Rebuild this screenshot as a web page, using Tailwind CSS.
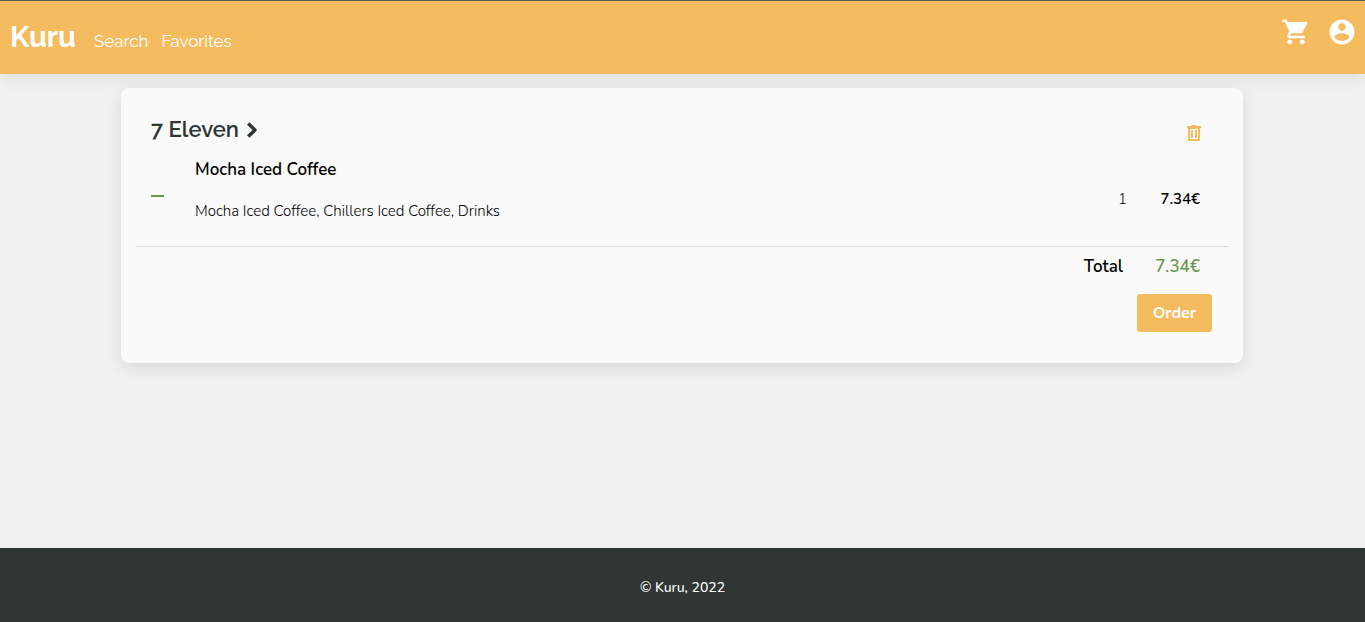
<!DOCTYPE html>
<html lang="en">
<head>
<meta charset="utf-8">
<meta name="viewport" content="width=device-width, initial-scale=1">
<title>Kuru</title>
<script src="https://cdn.jsdelivr.net/npm/@tailwindcss/browser@4"></script>
</head>
<body class="flex min-h-screen flex-col bg-[#f1f1f1] font-['Nunito','Noto_Sans',sans-serif] text-black">
<header class="flex items-start justify-between border-t border-[#5a5a5a] bg-[#f4bb5f] pt-4 pr-2 pb-[17px] pl-[10px] font-['Raleway','Lato',sans-serif] text-white shadow-[0_5px_15px_rgba(0,0,0,0.08)]">
  <nav class="flex h-10 items-baseline">
    <a href="#" class="mr-[18px] text-[29px] leading-10 font-bold">Kuru</a>
    <a href="#" class="mr-[13px] text-[17px]">Search</a>
    <a href="#" class="text-[17px]">Favorites</a>
  </nav>
  <div class="flex gap-4">
    <a href="#" aria-label="Cart"><svg class="size-[30px]" viewBox="0 0 24 24" fill="currentColor"><path d="M7 18c-1.100 0-1.990.9-1.990 2S5.900 22 7 22s2-.9 2-2-.9-2-2-2zM1 2v2h2l3.600 7.590-1.350 2.450c-.16.280-.25.610-.25.960 0 1.100.9 2 2 2h12v-2H7.420c-.14 0-.25-.11-.25-.25l.03-.12.900-1.630h7.450c.75 0 1.410-.41 1.750-1.030l3.580-6.490A1 1 0 0 0 20 4H5.210l-.94-2H1zm16 16c-1.100 0-1.990.9-1.990 2s.89 2 1.990 2 2-.9 2-2-.9-2-2-2z"/></svg></a>
    <a href="#" aria-label="Account"><svg class="size-[30px]" viewBox="0 0 24 24" fill="currentColor"><path d="M12 2C6.480 2 2 6.480 2 12s4.480 10 10 10 10-4.480 10-10S17.520 2 12 2zm0 3c1.660 0 3 1.340 3 3s-1.340 3-3 3-3-1.340-3-3 1.340-3 3-3zm0 14.200c-2.500 0-4.710-1.280-6-3.220.03-1.990 4-3.080 6-3.080 1.990 0 5.970 1.090 6 3.080-1.290 1.940-3.500 3.220-6 3.220z"/></svg></a>
  </div>
</header>
<main class="flex-1 py-[14px] pr-[17px] pl-4">
  <section class="mx-auto max-w-[1122px] rounded-lg bg-[#fafafa] px-[15px] pt-[23px] pb-[31px] shadow-[0_5px_15px_rgba(0,0,0,0.1)]">
    <div class="flex items-center justify-between pr-6 pl-[15px]">
      <h1 class="font-['Raleway','Lato',sans-serif] text-[22px] leading-9 font-semibold text-[#303633]"><a href="#" class="flex items-center gap-[7px]">7 Eleven
        <svg class="mt-px h-4 w-3" viewBox="0 0 12 16" fill="none" stroke="currentColor" stroke-width="3.400" stroke-linejoin="round"><path d="M2.200 1.500 9 8 2.200 14.500"/></svg></a></h1>
      <button type="button" aria-label="Delete order" class="mt-[10px] text-[#f4bb5f]"><svg class="size-5" viewBox="0 0 20 20" fill="currentColor"><path d="M7.500 1h5v1H17v2H3V2h4.500zM4 4h12v13H4zM6 5v10h8V5z" fill-rule="evenodd"/><path d="M7 6h2v8H7zM11 6h2v8h-2z"/></svg></button>
    </div>
    <div class="flex items-center border-b border-[#dcdcdc] pt-[11px] pr-7 pb-[23px] pl-[15px]">
      <button type="button" aria-label="Remove one" class="mt-[10px] mr-[31px] h-5 w-[13px] text-[#6a994e]"><svg class="h-[2px] w-[13px]" viewBox="0 0 13 2" fill="currentColor"><path d="M0 0h13v2H0z"/></svg></button>
      <div class="flex-1">
        <h2 class="mb-[17px] text-[17px] leading-6 font-semibold">Mocha Iced Coffee</h2>
        <p class="text-[15px] leading-6 font-light">Mocha Iced Coffee, Chillers Iced Coffee, Drinks</p>
      </div>
      <span class="mt-4 text-[15px] leading-5 font-light">1</span>
      <span class="mt-4 w-[73px] text-right text-[15px] leading-5 font-semibold">7.34€</span>
    </div>
    <div class="flex justify-end pt-2 pr-7 text-[17px] leading-6 font-semibold">
      <span>Total</span>
      <span class="w-[77px] text-right text-[#6a994e]">7.34€</span>
    </div>
    <div class="mt-[15px] flex justify-end pr-4">
      <button type="button" class="h-[38px] rounded-[3px] bg-[#f4bb5f] px-4 text-base font-bold text-white">Order</button>
    </div>
  </section>
</main>
<footer class="bg-[#303633] pt-[30px] pb-6 text-center text-sm leading-5 font-medium text-white">© Kuru, 2022</footer>
</body>
</html>
